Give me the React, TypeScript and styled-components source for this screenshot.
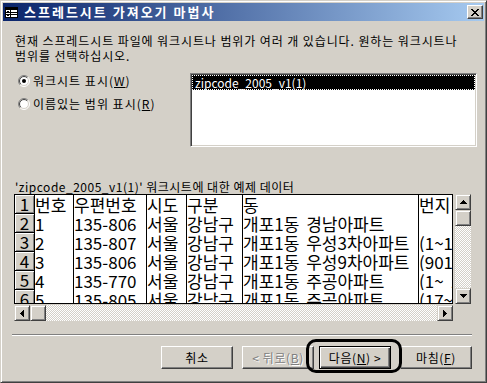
import React from "react";
import styled, { createGlobalStyle, css } from "styled-components";

const FACE = "#D4D0C8";
const SHADOW = "#808080";
const DARK = "#404040";
const KR = `"Noto Sans CJK KR", "Noto Sans", sans-serif`;

const GlobalStyle = createGlobalStyle`
  html, body { margin: 0; padding: 0; background: ${FACE}; }
  body { font-family: ${KR}; font-size: 12px; color: #000; }
`;

const Window = styled.div`
  box-sizing: border-box;
  width: 487px;
  height: 383px;
  display: flex;
  flex-direction: column;
  background: ${FACE};
  border: 1px solid;
  border-color: ${FACE} ${DARK} ${DARK} ${FACE};
  box-shadow: inset 1px 1px #fff, inset -1px -1px ${SHADOW};
  padding: 2px;
  overflow: hidden;
`;

const TitleBar = styled.div`
  flex: none;
  height: 18px;
  display: flex;
  align-items: center;
  padding: 0 1px 0 2px;
  background: linear-gradient(to right, #0a246a, #a6caf0);
`;

const TitleText = styled.div`
  flex: 1;
  margin-left: 3px;
  color: #fff;
  font-weight: bold;
  font-size: 13px;
  letter-spacing: 2px;
  line-height: 18px;
  white-space: nowrap;
`;

const CloseButton = styled.div`
  box-sizing: border-box;
  width: 16px;
  height: 14px;
  background: ${FACE};
  border: 1px solid;
  border-color: #fff ${DARK} ${DARK} #fff;
  box-shadow: inset -1px -1px ${SHADOW};
  display: flex;
  align-items: center;
  justify-content: center;
`;

const Body = styled.div`
  flex: 1;
  display: flex;
  flex-direction: column;
  padding: 12px 12px 0 11px;
`;

const Instruction = styled.div`
  margin-left: 1px;
  line-height: 15px;
  letter-spacing: 0.9px;
  white-space: nowrap;
`;

const Options = styled.div`
  display: flex;
  justify-content: space-between;
  margin-top: 10px;
`;

const RadioGroup = styled.div`
  display: flex;
  flex-direction: column;
  gap: 9px;
  padding-top: 1px;
  margin-left: 4px;
`;

const RadioRow = styled.label`
  display: flex;
  align-items: center;
  gap: 3px;
  height: 14px;
  line-height: 14px;
  letter-spacing: 1px;
  white-space: nowrap;
`;

const Mn = styled.span`
  text-decoration: underline;
`;

const ListBox = styled.div`
  box-sizing: border-box;
  width: 287px;
  height: 74px;
  margin-right: -5px;
  background: #fff;
  border: 1px solid;
  border-color: ${SHADOW} #fff #fff ${SHADOW};
  box-shadow: inset 1px 1px ${DARK}, inset -1px -1px ${FACE};
  padding: 1px;
`;

const ListItem = styled.div<{ $selected?: boolean }>`
  height: 15px;
  line-height: 15px;
  padding-left: 3px;
  white-space: nowrap;
  ${(p) =>
    p.$selected &&
    css`
      background: #000;
      color: #fff;
      outline: 1px dotted #fff;
      outline-offset: -1px;
    `}
`;

const SampleLabel = styled.div`
  margin: 32px 0 0 1px;
  line-height: 15px;
  letter-spacing: 0.5px;
  white-space: nowrap;
`;

const GridArea = styled.div`
  display: grid;
  grid-template-columns: 439px 16px;
  grid-template-rows: 110px 16px;
  column-gap: 2px;
  row-gap: 1px;
`;

const DataGrid = styled.div`
  box-sizing: border-box;
  border: 1px solid #000;
  background: #fff;
  overflow: hidden;
`;

const GridRow = styled.div`
  display: flex;
  height: 19px;
  overflow: hidden;
`;

const RowHead = styled.div`
  box-sizing: border-box;
  flex: none;
  width: 20px;
  background: ${FACE};
  border-right: 1px solid #000;
  border-bottom: 1px solid #000;
  box-shadow: inset 1px 1px #fff, inset -1px -1px ${SHADOW};
  text-align: center;
  font-size: 17px;
  line-height: 18px;
  overflow: hidden;
`;

const Cell = styled.div<{ $w: number; $last?: boolean }>`
  box-sizing: border-box;
  flex: none;
  width: ${(p) => p.$w}px;
  border-right: ${(p) => (p.$last ? "none" : "1px solid #000")};
  overflow: hidden;
  white-space: nowrap;
  font-size: 17px;
  word-spacing: 3px;
  line-height: 19px;
`;

const Track = styled.div<{ $vertical?: boolean }>`
  display: flex;
  flex-direction: ${(p) => (p.$vertical ? "column" : "row")};
  background: repeating-conic-gradient(#fff 0 25%, ${FACE} 0 50%) 0 0 / 2px 2px;
`;

const ScrollButton = styled.div`
  box-sizing: border-box;
  flex: none;
  width: 16px;
  height: 16px;
  background: ${FACE};
  border: 1px solid;
  border-color: ${FACE} ${DARK} ${DARK} ${FACE};
  box-shadow: inset 1px 1px #fff, inset -1px -1px ${SHADOW};
  display: flex;
  align-items: center;
  justify-content: center;
`;

const TrackSpace = styled.div`
  flex: 1;
`;

const Separator = styled.div`
  box-sizing: border-box;
  height: 2px;
  margin: 13px 0 0 -2px;
  border-top: 1px solid ${SHADOW};
  border-bottom: 1px solid #fff;
`;

const ButtonRow = styled.div`
  display: flex;
  justify-content: flex-end;
  margin-top: 10px;
`;

const Button = styled.button<{ $default?: boolean; $gap?: number }>`
  box-sizing: border-box;
  width: 72px;
  height: 23px;
  padding: 0;
  margin-left: ${(p) => p.$gap ?? 0}px;
  font-family: ${KR};
  font-size: 12px;
  letter-spacing: 0.6px;
  color: #000;
  background: ${FACE};
  border: 1px solid;
  border-color: #fff ${DARK} ${DARK} #fff;
  box-shadow: inset -1px -1px ${SHADOW};
  ${(p) =>
    p.$default &&
    css`
      border: 1px solid #000;
      box-shadow: inset 1px 1px #fff, inset -1px -1px ${DARK},
        inset -2px -2px ${SHADOW};
    `}
  &:disabled {
    color: ${SHADOW};
    text-shadow: 1px 1px #fff;
  }
`;

const Marked = styled.div`
  position: relative;
  margin-left: 5px;
  &::after {
    content: "";
    position: absolute;
    left: -13px;
    top: -7px;
    right: -11px;
    bottom: -4px;
    border: 3px solid #000;
    border-radius: 10px;
    pointer-events: none;
  }
`;

const TableIcon = () => (
  <svg width="16" height="16" viewBox="0 0 16 16" shapeRendering="crispEdges">
    <rect x="0.5" y="3.5" width="12" height="10" fill="#fff" stroke="#000" />
    <rect x="1" y="4" width="11" height="2" fill="#000" />
    <line x1="5.5" y1="6" x2="5.5" y2="13" stroke="#000" />
    <line x1="1" y1="8.5" x2="12" y2="8.5" stroke="#000" />
    <line x1="1" y1="10.5" x2="12" y2="10.5" stroke="#000" />
    <rect x="2" y="7" width="2" height="1" fill="#000" />
    <rect x="2" y="11" width="2" height="1" fill="#000" />
  </svg>
);

const CloseGlyph = () => {
  const px: React.ReactNode[] = [];
  for (let r = 0; r < 7; r++) {
    [r, r + 1, 6 - r, 7 - r].forEach((x, i) =>
      px.push(<rect key={`${r}-${i}`} x={x} y={r} width="1" height="1" />)
    );
  }
  return (
    <svg width="8" height="7" viewBox="0 0 8 7" shapeRendering="crispEdges">
      <g fill="#000">{px}</g>
    </svg>
  );
};

const Arrow = ({ dir }: { dir: "up" | "down" | "left" | "right" }) => {
  const rows = [1, 3, 5, 7];
  const seq = dir === "down" || dir === "right" ? [...rows].reverse() : rows;
  const vertical = dir === "up" || dir === "down";
  return (
    <svg
      width={vertical ? 7 : 4}
      height={vertical ? 4 : 7}
      viewBox={vertical ? "0 0 7 4" : "0 0 4 7"}
      shapeRendering="crispEdges"
    >
      {seq.map((w, i) =>
        vertical ? (
          <rect key={i} x={(7 - w) / 2} y={i} width={w} height="1" fill="#000" />
        ) : (
          <rect key={i} x={i} y={(7 - w) / 2} width="1" height={w} fill="#000" />
        )
      )}
    </svg>
  );
};

const Radio = ({ checked }: { checked?: boolean }) => {
  const arc = (r: number, tl: boolean) => {
    const d = r * Math.SQRT1_2;
    return tl
      ? `M${6 - d} ${6 + d} A${r} ${r} 0 0 1 ${6 + d} ${6 - d}`
      : `M${6 + d} ${6 - d} A${r} ${r} 0 0 1 ${6 - d} ${6 + d}`;
  };
  return (
    <svg width="12" height="12" viewBox="0 0 12 12">
      <circle cx="6" cy="6" r="5" fill="#fff" />
      <path d={arc(5.5, true)} stroke={SHADOW} fill="none" />
      <path d={arc(5.5, false)} stroke="#fff" fill="none" />
      <path d={arc(4.5, true)} stroke={DARK} fill="none" />
      <path d={arc(4.5, false)} stroke={FACE} fill="none" />
      {checked && <circle cx="6" cy="6" r="2" fill="#000" />}
    </svg>
  );
};

const widths = [39, 73, 40, 56, 176, 33];

const rows: string[][] = [
  ["번호", "우편번호", "시도", "구분", "동", "번지"],
  ["1", "135-806", "서울", "강남구", "개포1동 경남아파트", ""],
  ["2", "135-807", "서울", "강남구", "개포1동 우성3차아파트", "(1~16)"],
  ["3", "135-806", "서울", "강남구", "개포1동 우성9차아파트", "(901~906)"],
  ["4", "135-770", "서울", "강남구", "개포1동 주공아파트", "(1~ 16)"],
  ["5", "135-805", "서울", "강남구", "개포1동 주공아파트", "(17~33)"],
];

export default function App() {
  return (
    <>
      <GlobalStyle />
      <Window>
        <TitleBar>
          <TableIcon />
          <TitleText>스프레드시트 가져오기 마법사</TitleText>
          <CloseButton>
            <CloseGlyph />
          </CloseButton>
        </TitleBar>
        <Body>
          <Instruction>
            현재 스프레드시트 파일에 워크시트나 범위가 여러 개 있습니다. 원하는 워크시트나
            <br />
            범위를 선택하십시오.
          </Instruction>
          <Options>
            <RadioGroup>
              <RadioRow>
                <Radio checked />
                <span>
                  워크시트 표시(<Mn>W</Mn>)
                </span>
              </RadioRow>
              <RadioRow>
                <Radio />
                <span>
                  이름있는 범위 표시(<Mn>R</Mn>)
                </span>
              </RadioRow>
            </RadioGroup>
            <ListBox>
              <ListItem $selected>zipcode_2005_v1(1)</ListItem>
            </ListBox>
          </Options>
          <SampleLabel>'zipcode_2005_v1(1)' 워크시트에 대한 예제 데이터</SampleLabel>
          <GridArea>
            <DataGrid>
              {rows.map((row, r) => (
                <GridRow key={r}>
                  <RowHead>{r + 1}</RowHead>
                  {row.map((v, c) => (
                    <Cell key={c} $w={widths[c]} $last={c === widths.length - 1}>
                      {v}
                    </Cell>
                  ))}
                </GridRow>
              ))}
            </DataGrid>
            <Track $vertical>
              <ScrollButton>
                <Arrow dir="up" />
              </ScrollButton>
              <ScrollButton />
              <TrackSpace />
              <ScrollButton>
                <Arrow dir="down" />
              </ScrollButton>
            </Track>
            <Track>
              <ScrollButton>
                <Arrow dir="left" />
              </ScrollButton>
              <ScrollButton />
              <TrackSpace />
              <ScrollButton>
                <Arrow dir="right" />
              </ScrollButton>
            </Track>
          </GridArea>
          <Separator />
          <ButtonRow>
            <Button>취소</Button>
            <Button $gap={9} disabled>
              &lt; 뒤로(<Mn>B</Mn>)
            </Button>
            <Marked>
              <Button $default>
                다음(<Mn>N</Mn>) &gt;
              </Button>
            </Marked>
            <Button $gap={9}>
              마침(<Mn>F</Mn>)
            </Button>
          </ButtonRow>
        </Body>
      </Window>
    </>
  );
}
